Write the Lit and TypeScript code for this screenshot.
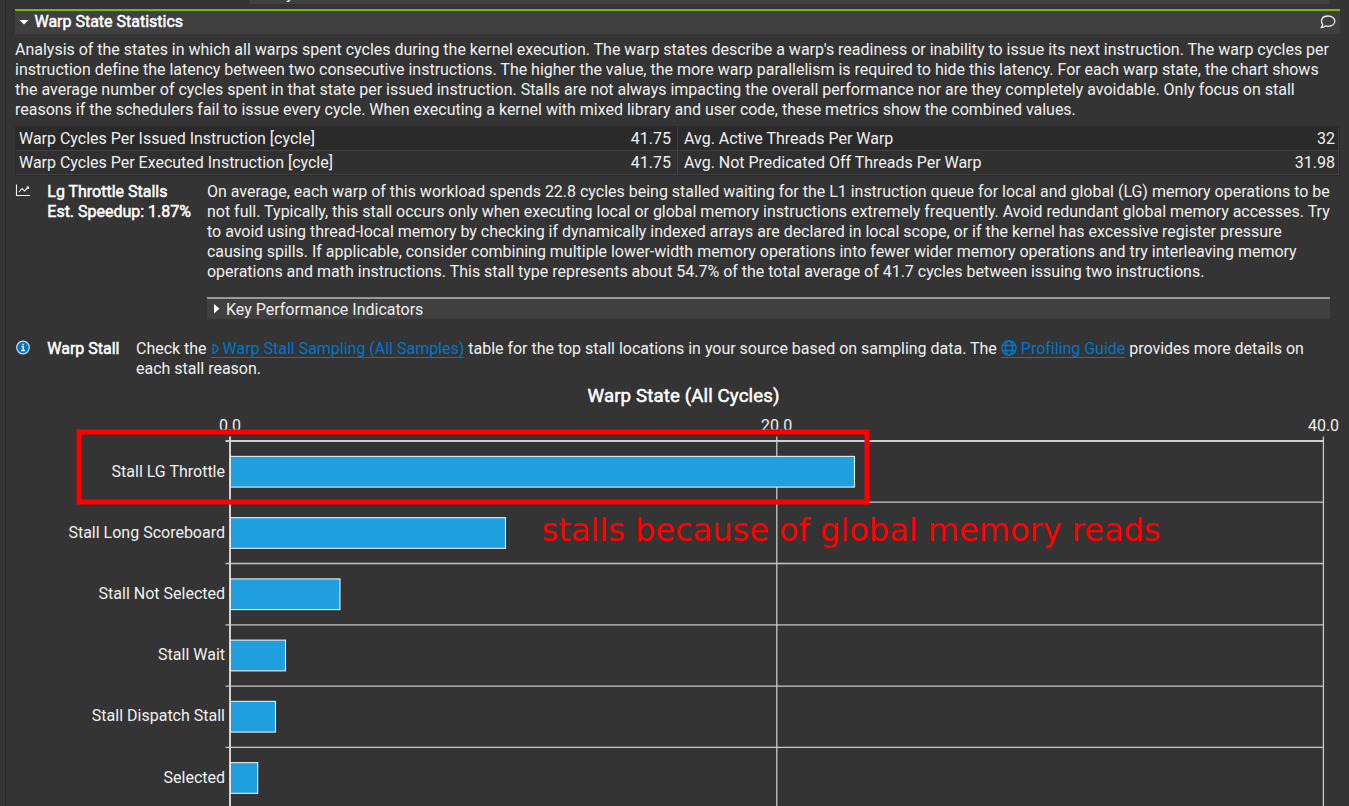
import { LitElement, html, css, svg } from "lit";
import { customElement } from "lit/decorators.js";

interface StallRow {
  label: string;
  end: number;
}

const ROWS: StallRow[] = [
  { label: "Stall LG Throttle", end: 854.5 },
  { label: "Stall Long Scoreboard", end: 505.5 },
  { label: "Stall Not Selected", end: 340 },
  { label: "Stall Wait", end: 285.5 },
  { label: "Stall Dispatch Stall", end: 275.5 },
  { label: "Selected", end: 257.7 },
];

const SUMMARY = [
  "Analysis of the states in which all warps spent cycles during the kernel execution. The warp states describe a warp's readiness or inability to issue its next instruction. The warp cycles per",
  "instruction define the latency between two consecutive instructions. The higher the value, the more warp parallelism is required to hide this latency. For each warp state, the chart shows",
  "the average number of cycles spent in that state per issued instruction. Stalls are not always impacting the overall performance nor are they completely avoidable. Only focus on stall",
  "reasons if the schedulers fail to issue every cycle. When executing a kernel with mixed library and user code, these metrics show the combined values.",
];

const ADVICE = [
  "On average, each warp of this workload spends 22.8 cycles being stalled waiting for the L1 instruction queue for local and global (LG) memory operations to be",
  "not full. Typically, this stall occurs only when executing local or global memory instructions extremely frequently. Avoid redundant global memory accesses. Try",
  "to avoid using thread-local memory by checking if dynamically indexed arrays are declared in local scope, or if the kernel has excessive register pressure",
  "causing spills. If applicable, consider combining multiple lower-width memory operations into fewer wider memory operations and try interleaving memory",
  "operations and math instructions. This stall type represents about 54.7% of the total average of 41.7 cycles between issuing two instructions.",
];

@customElement("stall-chart")
export class StallChart extends LitElement {
  static styles = css`
    :host { display: block; height: 426px; }
    svg { display: block; }
    text { font: 16px Roboto, sans-serif; fill: #f0f0f0; }
    .title { font-size: 18.67px; fill: #fff; stroke: #fff; stroke-width: 0.5px; }
    .note { font: 32px "DejaVu Sans", sans-serif; fill: #f00; }
    .grid { stroke: #c8c8c8; stroke-width: 1.3; fill: none; }
    .axis { stroke: #d0d0d0; stroke-width: 2; fill: none; }
    .bar { fill: #209fdf; stroke: #e8eef2; stroke-width: 1.1; }
    .mark { fill: none; stroke: #f00; stroke-width: 5; }
  `;

  render() {
    return html`<svg width="1349" height="426" viewBox="0 380 1349 426">
      <text class="title" x="587.5" y="402" textLength="192">Warp State (All Cycles)</text>
      <text x="230" y="431" text-anchor="middle">0.0</text>
      <text x="776.7" y="431" text-anchor="middle">20.0</text>
      <text x="1323.5" y="431" text-anchor="middle">40.0</text>
      ${ROWS.slice(1).map((_, i) => svg`<path class="grid" d="M225.5 ${502.2 + i * 61.3}H1323.5" />`)}
      <path class="grid" d="M776.8 436.5V810M1323.4 436.5V810" />
      <path class="axis" d="M225.5 441H1323.5" />
      <path class="axis" d="M230 436.5V810" />
      ${ROWS.map((r, i) => svg`
        <rect class="bar" x="230.4" y=${456.4 + i * 61.25} width=${r.end - 230.4} height="30.7" />
        <text x="225" y=${477 + Math.floor(i * 61.2)} text-anchor="end">${r.label}</text>`)}
      <rect class="mark" x="79" y="432" width="788" height="70" />
      <text class="note" x="541.5" y="541" textLength="619">stalls because of global memory reads</text>
    </svg>`;
  }
}

@customElement("app-root")
export class AppRoot extends LitElement {
  static styles = css`
    :host {
      display: block; width: 1349px; height: 806px; overflow: hidden;
      background: #343434; color: #f0f0f0; font: 16px/20px Roboto, sans-serif;
    }
    * { box-sizing: border-box; }
    svg { display: block; }
    .frame { height: 806px; overflow: hidden; background: linear-gradient(90deg, #363636 5px, #2a2a2a 5px, #2a2a2a 6px, transparent 6px); }
    .prev { height: 4px; margin-left: 250px; width: 1080px; background: #404040; display: flex; align-items: flex-end; padding-left: 18px; overflow: hidden; }
    .head { margin: 5px 9px 0 15px; height: 25px; border-top: 2px solid #76b900; background: #404040; display: flex; align-items: center; padding: 0 4px 2px 4px; }
    .head .bold { flex: 1; padding-left: 4.5px; letter-spacing: -0.01px; }
    .bold { color: #fff; -webkit-text-stroke: 0.5px #fff; white-space: nowrap; }
    .line { display: block; white-space: nowrap; letter-spacing: -0.011px; }
    .summary { margin: 6px 0 0 15px; height: 80px; }
    .table { margin: 6px 9px 0 15px; height: 50px; border: 1px solid #2b2b2b; display: grid; grid-template-columns: 662px 1fr; grid-template-rows: 24px 24px; letter-spacing: -0.011px; }
    .cell { display: flex; justify-content: space-between; align-items: center; padding: 0 6px 0 3px; background: #2a2a2a; border-right: 1px solid #414141; border-bottom: 1px solid #414141; }
    .cell.right { padding: 0 3px 0 6px; }
    .cell.alt { background: #303030; }
    .rule { display: flex; margin: 6px 0 0 15px; }
    .icon { width: 32px; padding-top: 1px; }
    .name { width: 160px; padding-left: 0.3px; }
    .body { width: 1123px; }
    .kpi { margin-top: 15px; margin-bottom: 1px; height: 22px; border-top: 2px solid #989898; background: #404040; display: flex; align-items: center; padding-left: 7px; gap: 6px; }
    .kpi span { padding-top: 2px; }
    .info { margin-top: 19px; }
    .info .name { width: 89px; }
    .info .body { width: 1190px; }
    a { color: #0077c8; background: linear-gradient(#0077c8, #0077c8) 0 18px / 100% 1px no-repeat; display: inline-flex; align-items: center; height: 20px; vertical-align: top; }
    .tri { margin: -1px 4px 0 1px; }
    .globe { margin: -2px 4px 0 0; }
    stall-chart { margin-top: 1px; }
  `;

  private lines(items: string[]) {
    return items.map((t) => html`<span class="line">${t}</span>`);
  }

  render() {
    return html`<div class="frame">
      <div class="prev">Key Performance Indicators</div>
      <div class="head">
        <svg width="11" height="8" viewBox="0 0 11 8"><path d="M.5 2h9L5 6.5z" fill="#fff" /></svg>
        <span class="bold">Warp State Statistics</span>
        <svg width="16" height="14" viewBox="0 0 16 14"><path d="M2.7 9.6C.2 6 1.6 1 8 1c4.300 0 6.800 2.300 6.800 5.100S12.300 11.300 8 11.300q-1.400 0-2.600-.4Q3.600 12.700 1.100 12.700q1.400-1.400 1.600-3.100z" fill="none" stroke="#f0f0f0" stroke-width="1.300" stroke-linejoin="round" /></svg>
      </div>
      <div class="summary">${this.lines(SUMMARY)}</div>
      <div class="table">
        <div class="cell"><span>Warp Cycles Per Issued Instruction [cycle]</span><span>41.75</span></div>
        <div class="cell right"><span>Avg. Active Threads Per Warp</span><span>32</span></div>
        <div class="cell alt"><span>Warp Cycles Per Executed Instruction [cycle]</span><span>41.75</span></div>
        <div class="cell alt right"><span>Avg. Not Predicated Off Threads Per Warp</span><span>31.98</span></div>
      </div>
      <div class="rule">
        <div class="icon"><svg width="16" height="14" viewBox="0 0 16 14"><path d="M1.5 1.500v11H15M4 9l3-3.500 2.500 2.500L13.500 4M11.500 4H13.500V6" fill="none" stroke="#f0f0f0" stroke-width="1.100" /></svg></div>
        <div class="name"><span class="line bold">Lg Throttle Stalls</span><span class="line bold">Est. Speedup: 1.87%</span></div>
        <div class="body">
          ${this.lines(ADVICE)}
          <div class="kpi">
            <svg width="6" height="11" viewBox="0 0 6 11"><path d="M0 0v9.500L5.500 4.700z" fill="#fff" /></svg>
            <span>Key Performance Indicators</span>
          </div>
        </div>
      </div>
      <div class="rule info">
        <div class="icon"><svg width="16" height="15" viewBox="0 0 16 15"><circle cx="8" cy="7.500" r="6.300" fill="#0077c8" stroke="#d8dce0" stroke-width="1.200" /><path d="M6.600 6.500H8.200V10.500M6.200 10.500H9.900M7.300 4.300H8.800" fill="none" stroke="#fff" stroke-width="1.300" /></svg></div>
        <div class="name"><span class="line bold">Warp Stall</span></div>
        <div class="body">
          <span class="line">Check the <a><svg class="tri" width="7" height="12" viewBox="0 0 7 12"><path d="M1 1.500V10.200L3 9.800Q5.800 7.500 5.800 5.800T3 2z" fill="none" stroke="#0077c8" stroke-width="1.400" /></svg>Warp Stall Sampling (All Samples)</a> table for the top stall locations in your source based on sampling data. The <a><svg class="globe" width="16" height="16" viewBox="0 0 16 16"><g fill="none" stroke="#0077c8" stroke-width="1.400"><circle cx="8" cy="8" r="7.200" /><ellipse cx="8" cy="8" rx="3.500" ry="7.200" /><path d="M1.500 5.500H14.500M1.500 10.500H14.500" /></g></svg>Profiling Guide</a> provides more details on</span>
          <span class="line">each stall reason.</span>
        </div>
      </div>
      <stall-chart></stall-chart>
    </div>`;
  }
}
